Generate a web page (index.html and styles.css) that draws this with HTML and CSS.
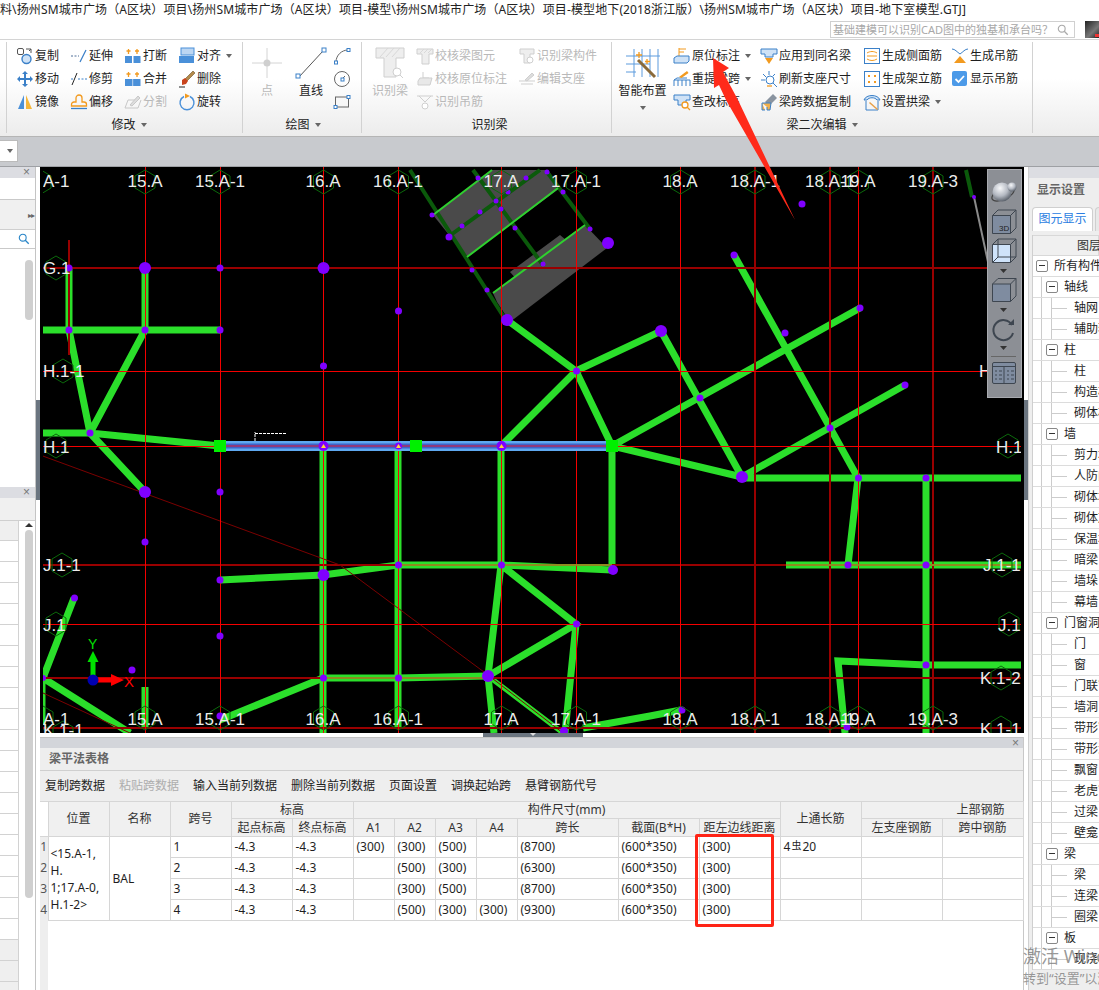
FILE: index.html
```html
<!DOCTYPE html>
<html lang="zh-CN">
<head>
<meta charset="utf-8">
<title>梁平法表格</title>
<link rel="stylesheet" href="styles.css">
</head>
<body>
<svg class="sprite" aria-hidden="true">
<defs>
<symbol id="i-copy" viewBox="0 0 18 18"><rect x="1.5" y="1.5" width="6" height="6" rx="1.5" fill="none" stroke="#555"/><path d="M10 2h5v4M15 2l-2 2" fill="none" stroke="#555"/><circle cx="10.5" cy="12" r="4.5" fill="#cfe2f6" stroke="#3b80c8" stroke-width="1.4"/></symbol>
<symbol id="i-move" viewBox="0 0 18 18"><path fill="#3b80c8" d="M9 1l3 3h-2v4h4V6l3 3-3 3v-2h-4v4h2l-3 3-3-3h2v-4H4v2L1 9l3-3v2h4V4H6z"/></symbol>
<symbol id="i-mirror" viewBox="0 0 18 18"><path fill="#4a90d9" d="M8 2v14H2z"/><path fill="#f5b63a" d="M10 2v14h6z"/></symbol>
<symbol id="i-extend" viewBox="0 0 18 18"><path d="M1 9h8" stroke="#4f6f98" stroke-dasharray="2 1.5" fill="none"/><path d="M10 15l6-12" stroke="#3b80c8" stroke-width="1.2" fill="none"/></symbol>
<symbol id="i-trim" viewBox="0 0 18 18"><path d="M2 15l5-12" stroke="#222" fill="none"/><path d="M1 9h3M8 9h9" stroke="#3b80c8" stroke-dasharray="2 1.5" fill="none"/></symbol>
<symbol id="i-offset" viewBox="0 0 18 18"><path d="M1.5 13v-1.5A2.5 2.5 0 0 1 4 9h2V5a3 3 0 0 1 3-3 3 3 0 0 1 3 3v4h2a2.5 2.5 0 0 1 2.5 2.5V13z" fill="none" stroke="#f29a1f" stroke-width="1.3"/><path d="M1 15.500h16" stroke="#3b80c8" stroke-width="1.3"/></symbol>
<symbol id="i-break" viewBox="0 0 18 18"><rect x="1" y="9" width="7" height="7" fill="#4a90d9"/><rect x="9.500" y="9" width="7" height="7" fill="#4a90d9"/><path d="M4.500 2v5M2.500 4h4M13 2v5M11 4h4" stroke="#f29a1f" stroke-width="1.300"/></symbol>
<symbol id="i-merge" viewBox="0 0 18 18"><rect x="1" y="9" width="15.500" height="7" fill="#4a90d9"/><path d="M8.700 9v7" stroke="#bcd6f2"/><path d="M4.500 2v5M2.500 4h4M13 2v5M11 4h4" stroke="#f29a1f" stroke-width="1.300"/></symbol>
<symbol id="i-split" viewBox="0 0 18 18"><path d="M1 15l3-8h8M1 15h13l3-8" fill="none" stroke="#c8c8c8"/><path d="M6 12l8-9 2 2-8 8z" fill="#ddd" stroke="#c8c8c8"/></symbol>
<symbol id="i-align" viewBox="0 0 18 18"><rect x="3" y="1" width="13" height="7" fill="#bcd6f2" stroke="#4a90d9"/><rect x="1" y="9" width="15" height="7" fill="#4a90d9"/></symbol>
<symbol id="i-del" viewBox="0 0 18 18"><path d="M7 9l8-8 2 2-8 8z" fill="#b48a4a" stroke="#6b5228" stroke-width=".6"/><path d="M4 10l3-2 3 3-2 3-4 1z" fill="#c9431c"/><path d="M1 17h6" stroke="#222"/></symbol>
<symbol id="i-rotate" viewBox="0 0 18 18"><path d="M6 3.500a7 7 0 1 0 6 0" fill="none" stroke="#4a90d9" stroke-width="1.400"/><path d="M7 .5l5 2.500-5 2.500z" fill="#f29a1f"/></symbol>
<symbol id="i-point" viewBox="0 0 36 36"><path d="M18 3v12M18 21v12M3 18h12M21 18h12" stroke="#d4d4d4"/><circle cx="18" cy="18" r="3.500" fill="#cfcfcf"/></symbol>
<symbol id="i-line" viewBox="0 0 36 36"><path d="M6 32L30 6" stroke="#555"/><rect x="3" y="29" width="4" height="4" fill="#fff" stroke="#3b80c8"/><rect x="29" y="3" width="4" height="4" fill="#fff" stroke="#3b80c8"/></symbol>
<symbol id="i-arc" viewBox="0 0 18 18"><path d="M3 15C3 8 9 3 15 3" fill="none" stroke="#666"/><rect x="1.500" y="14" width="3" height="3" fill="#fff" stroke="#3b80c8"/><rect x="14" y="1.500" width="3" height="3" fill="#fff" stroke="#3b80c8"/></symbol>
<symbol id="i-circle" viewBox="0 0 18 18"><circle cx="9" cy="9" r="7.500" fill="none" stroke="#666"/><path d="M9 9l3-3" stroke="#666"/><rect x="8" y="8" width="3" height="3" fill="#fff" stroke="#3b80c8"/></symbol>
<symbol id="i-rect" viewBox="0 0 18 18"><rect x="2.500" y="4" width="13" height="10" fill="none" stroke="#666"/><rect x="1" y="12.500" width="3" height="3" fill="#fff" stroke="#3b80c8"/><rect x="14" y="2.500" width="3" height="3" fill="#fff" stroke="#3b80c8"/></symbol>
<symbol id="i-idbeam" viewBox="0 0 36 36"><path d="M4 3h28v10H24v19H12V13H4z" fill="#eee" stroke="#cfcfcf"/><path d="M8 12l8-9M14 12l8-9M20 12l8-9" stroke="#d8d8d8"/><circle cx="25" cy="27" r="4" fill="#fff" stroke="#cfcfcf"/><path d="M28 30l3 3" stroke="#cfcfcf"/></symbol>
<symbol id="i-chk1" viewBox="0 0 18 18"><path d="M1 2h16v5h-4v10H6V7H1z" fill="#eee" stroke="#cfcfcf"/><path d="M4 6l4-4M8 6l4-4M12 6l4-4" stroke="#d8d8d8"/></symbol>
<symbol id="i-chk2" viewBox="0 0 18 18"><path d="M7 2v6h6" fill="none" stroke="#cfcfcf"/><path d="M2 11l2-3h12l-2 7H2z" fill="#e8e8e8" stroke="#cfcfcf"/></symbol>
<symbol id="i-idhang" viewBox="0 0 18 18"><path d="M1 3h16M3 3l6 6 6-6" fill="none" stroke="#cfcfcf"/><circle cx="9" cy="13" r="3" fill="#fff" stroke="#cfcfcf"/></symbol>
<symbol id="i-idcomp" viewBox="0 0 18 18"><path d="M2 2h14v5h-4v9H6V7H2z" fill="#eee" stroke="#cfcfcf"/><circle cx="12" cy="13" r="3" fill="#fff" stroke="#cfcfcf"/></symbol>
<symbol id="i-editsup" viewBox="0 0 18 18"><path d="M1 11h16M3 14h12" stroke="#cfcfcf"/><path d="M7 10l7-7 2 2-7 6z" fill="#ddd" stroke="#cfcfcf"/></symbol>
<symbol id="i-smart" viewBox="0 0 36 36"><path d="M9 4v28M17 4v28M25 4v28M33 4v28M1 11h34M1 19h24M1 27h10" stroke="#5c9bdd" fill="none"/><path d="M13 15l17 17" stroke="#8a6a3a" stroke-width="3"/><path d="M14 7v6M11 10h6M22 14v5M20 16.500h5" stroke="#f29a1f" stroke-width="1.300"/></symbol>
<symbol id="i-orig" viewBox="0 0 18 18"><path d="M6 1v8M6 2h7M6 5h5" stroke="#f29a1f" fill="none"/><path d="M1 11l3-2h12v5l-2 2H1z" fill="#cfe2f6" stroke="#3b80c8"/></symbol>
<symbol id="i-refetch" viewBox="0 0 18 18"><path d="M1 16V10h16v6M5 10v6M9 10v6M13 10v6M1 10l3-2h10" fill="none" stroke="#3b80c8"/><path d="M6 7l8-6 1.500 2-7 5z" fill="#f29a1f"/></symbol>
<symbol id="i-elev" viewBox="0 0 18 18"><path d="M1 2h16v5h-4v5H5V7H1z" fill="#cfe2f6" stroke="#3b80c8"/><circle cx="12" cy="12" r="3" fill="#fff" stroke="#f29a1f" stroke-width="1.300"/><path d="M14 14l3 3" stroke="#f29a1f" stroke-width="1.300"/></symbol>
<symbol id="i-apply" viewBox="0 0 18 18"><path d="M1 2h16v5h-4v3H5V7H1z" fill="#cfe2f6" stroke="#3b80c8"/><path d="M5 11h8l-4 6z" fill="#f29a1f"/></symbol>
<symbol id="i-refresh" viewBox="0 0 18 18"><circle cx="10" cy="10" r="4" fill="#fff" stroke="#3b80c8"/><path d="M9 1v4M3 4l3 3M1 10h4M15 4l-2 2M13 13l4 4" stroke="#3b80c8" fill="none"/><path d="M7 16h5" stroke="#f29a1f" stroke-width="1.300"/></symbol>
<symbol id="i-span" viewBox="0 0 18 18"><path d="M5 9l8-8 4 4-8 8z" fill="#8a94a0"/><path d="M2 10h9l-1 7H7v-3M2 10v7h3" fill="#f2b04a" stroke="#3b80c8"/></symbol>
<symbol id="i-side" viewBox="0 0 18 18"><rect x="1.500" y="1.500" width="15" height="15" fill="#fff" stroke="#3b80c8"/><path d="M4 6c3-2 7-2 10 0M4 12c3 2 7 2 10 0M4 9h10" fill="none" stroke="#f29a1f"/></symbol>
<symbol id="i-erect" viewBox="0 0 18 18"><rect x="1.500" y="1.500" width="15" height="15" fill="#fff" stroke="#3b80c8"/><path d="M5 5h2v2H5zM11 5h2v2h-2zM5 11h2v2H5zM11 11h2v2h-2z" fill="#f29a1f"/></symbol>
<symbol id="i-arch" viewBox="0 0 18 18"><path d="M1 7C3 1 15 1 17 7l-3 0C12 4 6 4 4 7z" fill="#cfe2f6" stroke="#3b80c8"/><path d="M3 8v9h12V8" fill="none" stroke="#3b80c8"/><path d="M7 9l8 7-1 1-8-7z" fill="#e8a048"/></symbol>
<symbol id="i-hang" viewBox="0 0 18 18"><path d="M1 2c3 0 5 3 8 5 3-2 5-5 8-5" fill="none" stroke="#3b80c8"/><path d="M9 9l6 7H3z" fill="#f29a1f"/></symbol>
<symbol id="i-check" viewBox="0 0 18 18"><rect x="1" y="1" width="15" height="15" rx="2" fill="#4c9ae8"/><path d="M4.500 9l3 3 5.500-6" fill="none" stroke="#fff" stroke-width="1.800"/></symbol>
<symbol id="i-search" viewBox="0 0 14 14"><circle cx="5.500" cy="5.500" r="4" fill="none" stroke="currentColor" stroke-width="1.300"/><path d="M8.500 8.500l4 4" stroke="currentColor" stroke-width="1.500"/></symbol>
<polygon id="hex" points="0,-12 10,-6 10,6 0,12 -10,6 -10,-6"/>
</defs>
</svg>

<header class="titlebar">
<div class="title">料\扬州SM城市广场（A区块）项目\扬州SM城市广场（A区块）项目-模型\扬州SM城市广场（A区块）项目-模型地下(2018浙江版）\扬州SM城市广场（A区块）项目-地下室模型.GTJ]</div>
<div class="title-tools">
<div class="searchbox"><span>基础建模可以识别CAD图中的独基和承台吗？</span><svg class="search-ico"><use href="#i-search"/></svg></div>
<div class="avatar"><span class="avatar-dot"></span></div>
</div>
</header>

<section class="ribbon">
<div class="rgroup g1">
<div class="rbody">
<div class="rcol w54">
<div class="ritem"><svg class="ico"><use href="#i-copy"/></svg>复制</div>
<div class="ritem"><svg class="ico"><use href="#i-move"/></svg>移动</div>
<div class="ritem"><svg class="ico"><use href="#i-mirror"/></svg>镜像</div>
</div>
<div class="rcol w54">
<div class="ritem"><svg class="ico"><use href="#i-extend"/></svg>延伸</div>
<div class="ritem"><svg class="ico"><use href="#i-trim"/></svg>修剪</div>
<div class="ritem"><svg class="ico"><use href="#i-offset"/></svg>偏移</div>
</div>
<div class="rcol w54">
<div class="ritem"><svg class="ico"><use href="#i-break"/></svg>打断</div>
<div class="ritem"><svg class="ico"><use href="#i-merge"/></svg>合并</div>
<div class="ritem off"><svg class="ico"><use href="#i-split"/></svg>分割</div>
</div>
<div class="rcol w54">
<div class="ritem"><svg class="ico"><use href="#i-align"/></svg>对齐<i class="caret"></i></div>
<div class="ritem"><svg class="ico"><use href="#i-del"/></svg>删除</div>
<div class="ritem"><svg class="ico"><use href="#i-rotate"/></svg>旋转</div>
</div>
</div>
<div class="rlabel">修改<i class="caret"></i></div>
</div>

<div class="rgroup g2">
<div class="rbody">
<div class="rbig off"><svg class="ico-big"><use href="#i-point"/></svg>点</div>
<div class="rbig"><svg class="ico-big"><use href="#i-line"/></svg>直线</div>
<div class="rcol w20">
<div class="ritem"><svg class="ico"><use href="#i-arc"/></svg></div>
<div class="ritem"><svg class="ico"><use href="#i-circle"/></svg></div>
<div class="ritem"><svg class="ico"><use href="#i-rect"/></svg></div>
</div>
</div>
<div class="rlabel">绘图<i class="caret"></i></div>
</div>

<div class="rgroup g3">
<div class="rbody">
<div class="rbig off"><svg class="ico-big"><use href="#i-idbeam"/></svg>识别梁</div>
<div class="rcol w102">
<div class="ritem off"><svg class="ico"><use href="#i-chk1"/></svg>校核梁图元</div>
<div class="ritem off"><svg class="ico"><use href="#i-chk2"/></svg>校核原位标注</div>
<div class="ritem off"><svg class="ico"><use href="#i-idhang"/></svg>识别吊筋</div>
</div>
<div class="rcol w90">
<div class="ritem off"><svg class="ico"><use href="#i-idcomp"/></svg>识别梁构件</div>
<div class="ritem off"><svg class="ico"><use href="#i-editsup"/></svg>编辑支座</div>
</div>
</div>
<div class="rlabel">识别梁</div>
</div>

<div class="rgroup g4">
<div class="rbody">
<div class="rbig wide"><svg class="ico-big"><use href="#i-smart"/></svg>智能布置<i class="caret"></i></div>
<div class="rcol w87">
<div class="ritem"><svg class="ico"><use href="#i-orig"/></svg>原位标注<i class="caret"></i></div>
<div class="ritem"><svg class="ico"><use href="#i-refetch"/></svg>重提梁跨<i class="caret"></i></div>
<div class="ritem"><svg class="ico"><use href="#i-elev"/></svg>查改标高</div>
</div>
<div class="rcol w103">
<div class="ritem"><svg class="ico"><use href="#i-apply"/></svg>应用到同名梁</div>
<div class="ritem"><svg class="ico"><use href="#i-refresh"/></svg>刷新支座尺寸</div>
<div class="ritem"><svg class="ico"><use href="#i-span"/></svg>梁跨数据复制</div>
</div>
<div class="rcol w88">
<div class="ritem"><svg class="ico"><use href="#i-side"/></svg>生成侧面筋</div>
<div class="ritem"><svg class="ico"><use href="#i-erect"/></svg>生成架立筋</div>
<div class="ritem"><svg class="ico"><use href="#i-arch"/></svg>设置拱梁<i class="caret"></i></div>
</div>
<div class="rcol w80">
<div class="ritem"><svg class="ico"><use href="#i-hang"/></svg>生成吊筋</div>
<div class="ritem"><svg class="ico"><use href="#i-check"/></svg>显示吊筋</div>
</div>
</div>
<div class="rlabel">梁二次编辑<i class="caret"></i></div>
</div>
</section>

<div class="subbar"><div class="combo"><i class="caret"></i></div></div>

<main class="workspace">
<aside class="leftpanel">
<div class="lp-top">
<div class="lp-title"><span class="close">×</span></div>
<div class="lp-blank"></div>
<div class="lp-tabs"><span class="more">▸▸</span></div>
<div class="lp-search"><svg class="lp-search-ico"><use href="#i-search"/></svg></div>
<div class="lp-list"><div class="thumb"></div></div>
</div>
<div class="lp-bottom">
<div class="lp-title"><span class="close">×</span></div>
<div class="lp-tabs short"></div>
<div class="lp-grid">
<div class="lp-rows">
<div class="lp-head"></div>
<div class="lp-row"></div><div class="lp-row"></div><div class="lp-row"></div><div class="lp-row"></div>
<div class="lp-row"></div><div class="lp-row"></div><div class="lp-row"></div><div class="lp-row"></div>
<div class="lp-row"></div><div class="lp-row"></div><div class="lp-row"></div><div class="lp-row"></div>
<div class="lp-row"></div><div class="lp-row"></div><div class="lp-row"></div><div class="lp-row"></div>
<div class="lp-row"></div><div class="lp-row"></div><div class="lp-row"></div>
<div class="lp-row gray"></div><div class="lp-row gray"></div><div class="lp-row gray"></div>
</div>
<div class="lp-scroll"><span class="arrow-up"></span><div class="thumb long"></div></div>
</div>
</div>
</aside>

<div class="gutter"><div class="grip"></div></div>

<div class="center">
<div class="canvas">
<svg class="cad" viewBox="40 167 984 566" width="984" height="566">
<defs><clipPath id="cadclip"><rect x="43" y="167" width="978" height="566"/></clipPath></defs>
<g clip-path="url(#cadclip)">
<g class="slab">
<polygon points="433,215 492,170 548,170 560,188 467,257"/>
<polygon points="510,272 560,235 590,260 535,300"/>
<polygon points="493,293 585,225 607,248 510,322 497,302"/>
</g>
<g class="wall">
<path d="M410 170L507 322M473 170L543 265M540 170L448 237M547 172L590 229M972 197L966 170"/>
</g>
<path class="thin-green" d="M433 215L492 170M467 257L558 188M493 293L585 225"/>
<path class="gray-line" d="M974 197L988 262"/>

<g class="beam">
<path d="M69 268V330M145 268V330M43 330H220M69 330L90 433M145 330L90 433M43 433H90L220 446M90 433L145 492"/>
<path d="M323 446V733M398 446V728M501 446V565M612 446V570"/>
<path d="M220 580L323 575L398 565H501L612 570"/>
<path d="M220 720L323 678H398L488 676"/>
<path d="M501 565L488 676L494 733M501 565L576 624L488 676M576 624L565 733"/>
<path d="M583 728L650 716L681 710"/>
<path d="M507 320L576 371L661 331L742 477M576 371L501 446M576 371L612 446L742 477M612 446L860 308M734 255L858 478M742 477L905 385M742 478H1022"/>
<path d="M858 478L848 565M786 565H1022M926 478V733M1022 665L926 665L838 661L845 733"/>
<path d="M74 598L43 678L130 733M145 687V728"/>
</g>
<path class="beam-thin" d="M488 676L563 733M43 680V725"/>

<g class="grid-dark">
<path d="M69 240V355M755 167V733M830 167V733M933 167V733M43 268H1021M43 565H1021M43 678H1021M43 728H1021"/>
</g>
<path class="grid-curve" d="M40 455L340 565L488 675L563 733M43 693L130 733"/>
<g class="grid-bright">
<path d="M145 167V733M220 167V733M323 167V733M398 167V733M501 167V733M576 167V733M680 167V733M858 167V733M43 371H1021M43 446H1021M43 624H1021"/>
</g>
<path class="core" d="M398 565H612M786 565H1022M323 678H488"/>

<path class="blue-outer" d="M220 446H612"/>
<path class="blue-inner" d="M220 446H612"/>
<path class="blue-core" d="M220 446H612"/>
<path class="note" d="M255 441V432M255 433.500H287"/>

<g class="column">
<rect x="214" y="440" width="12" height="12"/><rect x="410" y="440" width="12" height="12"/><rect x="606" y="440" width="12" height="12"/>
</g>

<g class="node">
<circle cx="145" cy="268" r="6"/><circle cx="323.500" cy="268" r="6"/><circle cx="145" cy="492" r="6"/><circle cx="323.500" cy="575" r="6"/><circle cx="488" cy="676" r="6"/><circle cx="661" cy="331" r="6"/><circle cx="742" cy="477" r="6"/><circle cx="507" cy="320" r="6"/><circle cx="608" cy="243" r="6"/><circle cx="613" cy="570" r="5"/>
<circle cx="323.500" cy="446" r="5"/><circle cx="501.500" cy="446" r="5"/><circle cx="398.500" cy="446" r="3.500"/>
<circle cx="69" cy="268" r="3.500"/><circle cx="220" cy="268" r="3.500"/><circle cx="398.500" cy="311" r="3.500"/><circle cx="323.500" cy="366" r="3.500"/><circle cx="69" cy="330" r="3.500"/><circle cx="145" cy="330" r="3.500"/><circle cx="220" cy="330" r="3.500"/><circle cx="90" cy="433" r="3.500"/><circle cx="220" cy="492" r="3.500"/><circle cx="145" cy="542" r="3.500"/><circle cx="220" cy="580" r="3.500"/><circle cx="74.500" cy="598" r="3.500"/><circle cx="220" cy="636" r="3.500"/><circle cx="132" cy="670" r="3.500"/><circle cx="220" cy="716" r="3.500"/><circle cx="323.500" cy="678" r="3.500"/><circle cx="398.500" cy="565" r="3.500"/><circle cx="398.500" cy="678" r="3.500"/><circle cx="501.500" cy="565" r="3.500"/><circle cx="576.500" cy="624" r="3.500"/><circle cx="576.500" cy="371" r="3.500"/><circle cx="700" cy="398" r="3.500"/><circle cx="802" cy="204" r="3.500"/><circle cx="734" cy="255" r="3.500"/><circle cx="785" cy="333" r="3.500"/><circle cx="860" cy="308" r="3.500"/><circle cx="830" cy="428" r="3.500"/><circle cx="905" cy="385" r="3.500"/><circle cx="858.500" cy="478" r="3.500"/><circle cx="926" cy="478" r="3.500"/><circle cx="848" cy="565" r="3.500"/><circle cx="926" cy="565" r="3.500"/><circle cx="926" cy="665" r="3.500"/><circle cx="682" cy="710" r="3.500"/><circle cx="847" cy="727" r="3.500"/><circle cx="564" cy="731" r="4"/><circle cx="43" cy="678" r="3"/>
<circle cx="432" cy="215" r="2.500"/><circle cx="449" cy="237" r="3.500"/><circle cx="462" cy="226" r="2.500"/><circle cx="480" cy="212" r="2.500"/><circle cx="478" cy="178" r="2.500"/><circle cx="526" cy="178" r="2.500"/><circle cx="547" cy="172" r="2.500"/><circle cx="496" cy="201" r="2.500"/><circle cx="501" cy="209" r="2.500"/><circle cx="508" cy="192" r="2.500"/><circle cx="515" cy="228" r="2.500"/><circle cx="563" cy="192" r="2.500"/><circle cx="590" cy="229" r="2.500"/><circle cx="543" cy="264" r="2.500"/><circle cx="472" cy="270" r="2.500"/><circle cx="487" cy="290" r="2.500"/><circle cx="974" cy="197" r="2"/>
</g>
<path class="tri" d="M323.500 444l2.500 4h-5zM398.500 444l2.500 4h-5zM501.500 444l2.500 4h-5z"/>

<g class="hexes">
<use href="#hex" x="41" y="182"/><use href="#hex" x="145" y="182"/><use href="#hex" x="220" y="182"/><use href="#hex" x="323.500" y="182"/><use href="#hex" x="398.500" y="182"/><use href="#hex" x="501.500" y="182"/><use href="#hex" x="576.500" y="182"/><use href="#hex" x="680.500" y="182"/><use href="#hex" x="755" y="182"/><use href="#hex" x="830" y="182"/><use href="#hex" x="858.500" y="182"/><use href="#hex" x="933" y="182"/>
<use href="#hex" x="145" y="718"/><use href="#hex" x="220" y="718"/><use href="#hex" x="323.500" y="718"/><use href="#hex" x="398.500" y="718"/><use href="#hex" x="501.500" y="718"/><use href="#hex" x="576.500" y="718"/><use href="#hex" x="680.500" y="718"/><use href="#hex" x="755" y="718"/><use href="#hex" x="830" y="718"/><use href="#hex" x="858.500" y="718"/><use href="#hex" x="933" y="718"/>
<use href="#hex" x="56" y="268"/><use href="#hex" x="63" y="371"/><use href="#hex" x="56" y="446"/><use href="#hex" x="62" y="565"/><use href="#hex" x="56" y="624"/><use href="#hex" x="43" y="718"/><use href="#hex" x="63" y="733"/>
<use href="#hex" x="1008" y="446"/><use href="#hex" x="1002" y="565"/><use href="#hex" x="1009" y="624"/><use href="#hex" x="1001" y="678"/><use href="#hex" x="1001" y="728"/>
</g>
<g class="axis">
<text x="43" y="187" class="start">A-1</text>
<text x="145" y="187">15.A</text><text x="220" y="187">15.A-1</text><text x="323" y="187">16.A</text><text x="398" y="187">16.A-1</text><text x="501" y="187">17.A</text><text x="576" y="187">17.A-1</text><text x="680" y="187">18.A</text><text x="755" y="187">18.A-1</text><text x="830" y="187">18.A-1</text><text x="858" y="187">19.A</text><text x="933" y="187">19.A-3</text>
<text x="43" y="725" class="start">A-1</text>
<text x="145" y="725">15.A</text><text x="220" y="725">15.A-1</text><text x="323" y="725">16.A</text><text x="398" y="725">16.A-1</text><text x="501" y="725">17.A</text><text x="576" y="725">17.A-1</text><text x="680" y="725">18.A</text><text x="755" y="725">18.A-1</text><text x="830" y="725">18.A-1</text><text x="858" y="725">19.A</text><text x="933" y="725">19.A-3</text>
<text x="43" y="274" class="start">G.1</text><text x="43" y="377" class="start">H.1-1</text><text x="43" y="453" class="start">H.1</text><text x="43" y="571" class="start">J.1-1</text><text x="43" y="631" class="start">J.1</text><text x="43" y="736" class="start">K.1-1</text>
<text x="979" y="377" class="start">H.1-1</text><text x="996" y="453" class="start">H.1</text><text x="983" y="571" class="start">J.1-1</text><text x="998" y="631" class="start">J.1</text><text x="980" y="684" class="start">K.1-2</text><text x="980" y="735" class="start">K.1-1</text>
</g>
</g>
<g class="ucs">
<path class="ucs-x" d="M93 680H113"/><path class="ucs-xh" d="M111 674V686L124 680Z"/>
<path class="ucs-y" d="M93 680V660"/><path class="ucs-yh" d="M87.500 662H98.500L93 651Z"/>
<circle class="ucs-o" cx="93" cy="680" r="5.500"/>
<text class="ucs-xt" x="124" y="687">X</text><text class="ucs-yt" x="88" y="649">Y</text>
</g>
</svg>
<div class="viewbar">
<svg viewBox="988 170 33 227" width="33" height="227">
<defs><radialGradient id="orb" cx=".4" cy=".3" r=".75"><stop offset="0" stop-color="#f7f8fa"/><stop offset=".55" stop-color="#b4b9c2"/><stop offset="1" stop-color="#4f5660"/></radialGradient></defs>
<ellipse cx="1003" cy="194" rx="12" ry="5.500" transform="rotate(-25 1003 194)" fill="none" stroke="#444" stroke-width="1.200"/>
<circle cx="1002" cy="192" r="9.500" fill="url(#orb)"/><circle cx="1012" cy="187" r="4.500" fill="url(#orb)"/>
<g class="vb-cube"><path d="M992.500 215.500H1010.500V233.500H992.500Z"/><path d="M992.500 215.500L998 210H1016V228L1010.500 233.500M1010.500 215.500L1016 210"/></g>
<text class="vb-3d" x="999" y="231">3D</text>
<g class="vb-cube light"><path d="M992.500 244.500H1010.500V262.500H992.500Z"/><path d="M992.500 244.500L998 239H1016V257L1010.500 262.500M1010.500 244.500L1016 239M998 239V257H1016M998 257L992.500 262.500"/></g>
<path class="vb-tri" d="M1000 269h7l-3.500 4z"/>
<g class="vb-cube"><path d="M992.500 284H1010.500V301.500H992.500Z"/><path d="M992.500 284L998 278.500H1016V296L1010.500 301.500M1010.500 284L1016 278.500"/></g>
<path class="vb-tri" d="M1000 308h7l-3.500 4z"/>
<path class="vb-rot" d="M1012 325A10 10 0 1 0 1013 333"/><path class="vb-rotd" d="M1008 325h6v-6z"/>
<path class="vb-tri" d="M1000 346h7l-3.500 4z"/>
<path class="vb-sep" d="M991 356.500h25"/>
<g class="vb-cube"><rect x="992.500" y="362.500" width="23" height="21" rx="1.500"/><path d="M992.500 366.500h23M1004 366.500v17M995 371h2M995 375h2M995 379h2M999 371h3M999 375h3M999 379h3M1007 371h2M1007 375h2M1007 379h2M1011 371h3M1011 375h3M1011 379h3"/></g>
</svg>
</div>
</div>
<div class="splitter"><div class="split-grip"><span class="split-tri"></span></div></div>
<section class="tablepanel">
<div class="tp-strip"><span class="close">×</span></div>
<div class="tp-title">梁平法表格</div>
<div class="tp-tools">
<span>复制跨数据</span><span class="dim">粘贴跨数据</span><span>输入当前列数据</span><span>删除当前列数据</span><span>页面设置</span><span>调换起始跨</span><span>悬臂钢筋代号</span>
</div>
<div class="table-wrap">
<table class="beam-table">
<colgroup>
<col class="c8"><col class="c61"><col class="c61"><col class="c61"><col class="c61"><col class="c61">
<col class="c41"><col class="c41"><col class="c41"><col class="c41"><col class="c101">
<col class="c81"><col class="c81"><col class="c81"><col class="c81"><col class="c81">
</colgroup>
<thead>
<tr class="h1">
<th rowspan="2" class="corner"></th><th rowspan="2">位置</th><th rowspan="2">名称</th><th rowspan="2">跨号</th>
<th colspan="2">标高</th><th colspan="7">构件尺寸(mm)</th><th rowspan="2">上通长筋</th><th colspan="2" class="top-steel">上部钢筋</th>
</tr>
<tr class="h2">
<th>起点标高</th><th>终点标高</th><th>A1</th><th>A2</th><th>A3</th><th>A4</th><th>跨长</th><th>截面(B*H)</th><th>距左边线距离</th><th>左支座钢筋</th><th>跨中钢筋</th>
</tr>
</thead>
<tbody>
<tr><td class="rn">1</td><td rowspan="4" class="pos">&lt;15.A-1,<br>H.<br>1;17.A-0,<br>H.1-2&gt;</td><td rowspan="4">BAL</td><td>1</td><td>-4.3</td><td>-4.3</td><td>(300)</td><td>(300)</td><td>(500)</td><td></td><td>(8700)</td><td>(600*350)</td><td>(300)</td><td>4<span class="rebar">虫</span>20</td><td></td><td></td></tr>
<tr><td class="rn">2</td><td>2</td><td>-4.3</td><td>-4.3</td><td></td><td>(500)</td><td>(300)</td><td></td><td>(6300)</td><td>(600*350)</td><td>(300)</td><td></td><td></td><td></td></tr>
<tr><td class="rn">3</td><td>3</td><td>-4.3</td><td>-4.3</td><td></td><td>(300)</td><td>(500)</td><td></td><td>(8700)</td><td>(600*350)</td><td>(300)</td><td></td><td></td><td></td></tr>
<tr><td class="rn">4</td><td>4</td><td>-4.3</td><td>-4.3</td><td></td><td>(500)</td><td>(300)</td><td>(300)</td><td>(9300)</td><td>(600*350)</td><td>(300)</td><td></td><td></td><td></td></tr>
</tbody>
</table>
<div class="redbox"></div>
</div>
</section>
</div>

<div class="gutter right"><div class="grip"></div></div>

<aside class="rightpanel">
<div class="rp-strip"></div>
<div class="rp-title">显示设置</div>
<div class="rp-tabs"><div class="rp-tab">图元显示</div><div class="rp-tab ghost"></div></div>
<div class="tree">
<div class="tree-head">图层</div>
<div class="tn l0"><b class="box"></b>所有构件</div>
<div class="tn l1"><b class="box"></b>轴线</div>
<div class="tn l2">轴网</div>
<div class="tn l2">辅助轴线</div>
<div class="tn l1"><b class="box"></b>柱</div>
<div class="tn l2">柱</div>
<div class="tn l2">构造柱</div>
<div class="tn l2">砌体柱</div>
<div class="tn l1"><b class="box"></b>墙</div>
<div class="tn l2">剪力墙</div>
<div class="tn l2">人防门框墙</div>
<div class="tn l2">砌体墙</div>
<div class="tn l2">砌体加筋</div>
<div class="tn l2">保温墙</div>
<div class="tn l2">暗梁</div>
<div class="tn l2">墙垛</div>
<div class="tn l2">幕墙</div>
<div class="tn l1"><b class="box"></b>门窗洞</div>
<div class="tn l2">门</div>
<div class="tn l2">窗</div>
<div class="tn l2">门联窗</div>
<div class="tn l2">墙洞</div>
<div class="tn l2">带形窗</div>
<div class="tn l2">带形洞</div>
<div class="tn l2">飘窗</div>
<div class="tn l2">老虎窗</div>
<div class="tn l2">过梁</div>
<div class="tn l2">壁龛</div>
<div class="tn l1"><b class="box"></b>梁</div>
<div class="tn l2">梁</div>
<div class="tn l2">连梁</div>
<div class="tn l2">圈梁</div>
<div class="tn l1"><b class="box"></b>板</div>
<div class="tn l2">现浇板</div>
</div>
</aside>
</main>

<svg class="annot-arrow" viewBox="0 0 1099 990" width="1099" height="990" aria-hidden="true"><polygon points="713,58 729,68 723,72 738,100 795,220 726,100 719,85 714,88"/></svg>
<div class="watermark"><div class="wm-1">激活 Windows</div><div class="wm-2">转到“设置”以激活 Windows</div></div>
</body>
</html>
```

FILE: styles.css
```css
* { box-sizing: border-box; }
html, body { margin: 0; padding: 0; }
body {
  position: relative;
  width: 1099px;
  height: 990px;
  overflow: hidden;
  background: #fff;
  color: #1e1e1e;
  font: 12px/16px "Noto Sans", "Noto Sans CJK SC", sans-serif;
}
.sprite { position: absolute; width: 0; height: 0; }

/* title bar */
.titlebar { height: 40px; background: #fff; border-bottom: 1px solid #d4d4d4; }
.title { height: 19px; line-height: 19px; white-space: nowrap; overflow: hidden; color: #222; letter-spacing: .12px; }
.title-tools { display: flex; align-items: flex-start; justify-content: flex-end; padding-top: 2px; }
.searchbox {
  display: flex; align-items: center; justify-content: space-between;
  width: 245px; height: 17px; padding: 0 5px 0 2px;
  border: 1px solid #d0d0d0; color: #a8a8a8; font-size: 11px; line-height: 15px;
}
.search-ico { width: 12px; height: 12px; color: #aaa; }
.avatar { position: relative; width: 14px; height: 17px; margin-left: 10px; background: linear-gradient(135deg, #222, #777 60%, #222); }
.avatar-dot { position: absolute; right: 0; bottom: 1px; width: 4px; height: 3px; background: #e33; }

/* ribbon */
.ribbon {
  display: flex; height: 97px; padding: 2px 0 3px 6px;
  background: linear-gradient(#fff 40%, #ececec);
  border-bottom: 1px solid #b5b5b5;
}
.rgroup { display: flex; flex-direction: column; border-right: 1px solid #d2d2d2; }
.g1 { width: 237px; border-left: 1px solid #d2d2d2; padding-left: 9px; }
.g2 { width: 119px; padding-left: 2px; }
.g3 { width: 250px; padding-left: 6px; }
.g4 { width: 421px; }
.rbody { display: flex; padding-top: 2px; }
.rcol { display: flex; flex-direction: column; }
.w54 { width: 54px; } .w20 { width: 20px; } .w102 { width: 102px; } .w90 { width: 90px; }
.w87 { width: 87px; } .w103 { width: 103px; } .w88 { width: 88px; } .w80 { width: 80px; }
.g3 .rbig + .rcol { margin-left: 4px; }
.ritem { display: flex; align-items: center; height: 23px; white-space: nowrap; }
.ico { flex: none; width: 18px; height: 18px; margin-right: 1px; }
.rbig { display: flex; flex-direction: column; align-items: center; width: 44px; white-space: nowrap; }
.rbig.wide { width: 61px; }
.ico-big { width: 36px; height: 36px; margin: 1px 0 2px; }
.off { color: #b9b9b9; }
.rbig .caret { margin: 7px 0 0; }
.rlabel { flex: 1; display: flex; align-items: center; justify-content: center; padding-top: 4px; color: #222; }
.caret {
  display: inline-block; width: 0; height: 0; margin-left: 5px;
  border: 3px solid transparent; border-top: 4px solid #666; border-bottom: 0;
}

.subbar { height: 30px; padding-top: 3px; background: #c8cace; border-bottom: 1px solid #9ea0a4; }
.combo { display: flex; align-items: center; justify-content: flex-end; width: 18px; height: 22px; padding-right: 4px; background: #fff; border: 1px solid #bbb; border-left: 0; }

/* main area */
.workspace { display: grid; grid-template-columns: 36px 4px 984px 4px 71px; height: 823px; }
.gutter { padding-top: 233px; background: #fff; }
.grip { height: 100px; background: #6b7580; }

/* left panel */
.leftpanel { display: flex; flex-direction: column; border-right: 1px solid #c4c4c4; }
.lp-top { display: flex; flex-direction: column; height: 320px; }
.lp-title { display: flex; align-items: center; justify-content: flex-end; height: 11px; padding-right: 5px; background: #dcdde2; }
.close { color: #777; font: 12px/11px "Liberation Sans", sans-serif; }
.lp-blank { height: 22px; border-bottom: 1px solid #c9c9c9; }
.lp-tabs { display: flex; align-items: center; justify-content: flex-end; height: 30px; padding-right: 1px; background: #f0f0f0; border-bottom: 1px solid #cfcfcf; }
.lp-tabs.short { height: 23px; }
.more { color: #666; font-size: 8px; letter-spacing: -1px; }
.lp-search { display: flex; align-items: center; justify-content: flex-end; height: 19px; padding-right: 5px; border-bottom: 1px solid #c9c9c9; }
.lp-search-ico { width: 12px; height: 12px; color: #2a86c8; }
.lp-list { flex: 1; display: flex; justify-content: flex-end; padding: 11px 2px 0 0; }
.thumb { width: 8px; height: 60px; border-radius: 4px; background: #cfcfcf; }
.lp-bottom { flex: 1; display: flex; flex-direction: column; min-height: 0; }
.lp-grid { flex: 1; display: flex; min-height: 0; }
.lp-rows { width: 19px; border-right: 1px solid #d2d2d2; overflow: hidden; }
.lp-head { height: 20px; background: #efefef; border-bottom: 1px solid #d2d2d2; }
.lp-row { height: 21px; border-bottom: 1px solid #d2d2d2; }
.lp-row.gray { background: #efefef; }
.lp-scroll { flex: 1; display: flex; flex-direction: column; align-items: flex-end; padding: 2px 2px 0 0; }
.arrow-up { width: 0; height: 0; margin: 0 0 3px; border: 4px solid transparent; border-top: 0; border-bottom: 4px solid #333; }
.thumb.long { height: 368px; }

/* canvas */
.center { display: flex; flex-direction: column; min-width: 0; }
.canvas { position: relative; height: 566px; background: #000; }
.cad { display: block; }
.slab polygon { fill: #4a4a4a; }
.wall { fill: none; stroke: #0b5a0b; stroke-width: 4; }
.thin-green { fill: none; stroke: #2fd02f; stroke-width: 2; }
.gray-line { fill: none; stroke: #8a8a8a; stroke-width: 2; }
.beam { fill: none; stroke: #2bdf2b; stroke-width: 7; stroke-linejoin: miter; }
.beam-thin { fill: none; stroke: #2bdf2b; stroke-width: 5; }
.grid-dark { fill: none; stroke: #990000; stroke-width: 2; shape-rendering: crispEdges; }
.grid-curve { fill: none; stroke: #7a0000; stroke-width: 1; }
.grid-bright { fill: none; stroke: #f40000; stroke-width: 1; shape-rendering: crispEdges; }
.core { fill: none; stroke: #8f8a20; stroke-width: 2; shape-rendering: crispEdges; }
.blue-outer { stroke: #5ea8f0; stroke-width: 10; }
.blue-inner { stroke: #3f63c8; stroke-width: 5; }
.blue-core { stroke: #e01030; stroke-width: 1; }
.note { fill: none; stroke: #fff; stroke-width: 1; stroke-dasharray: 3 1; }
.column rect { fill: #00f000; }
.node circle { fill: #8000ff; }
.tri { fill: #ffd83a; }
.hexes { fill: none; stroke: #0b6a0b; stroke-width: 1; }
.axis text { fill: #ececec; font: 17px "Liberation Sans", sans-serif; text-anchor: middle; }
.axis text.start { text-anchor: start; }
.ucs-x { stroke: #f00; stroke-width: 5; }
.ucs-xh { fill: #f00; }
.ucs-y { stroke: #00e000; stroke-width: 5; }
.ucs-yh { fill: #00e000; }
.ucs-o { fill: #0000b0; }
.ucs-xt { fill: #f00; font: 15px "Liberation Sans", sans-serif; }
.ucs-yt { fill: #00e000; font: 14px "Liberation Sans", sans-serif; }

.viewbar { position: absolute; left: 948px; top: 3px; width: 33px; height: 227px; background: #8c8f95; outline: 1px solid #a9abb0; }
.viewbar svg { display: block; }
.vb-cube { fill: none; stroke: #3e4650; stroke-width: 1; }
.vb-cube path:first-child, .vb-cube rect { fill: #7f8ca0; }
.vb-cube.light path:first-child { fill: #cfe3fa; }
.vb-3d { fill: #222; font: 8px "Liberation Sans", sans-serif; }
.vb-tri { fill: #333; }
.vb-rot { fill: none; stroke: #3e4650; stroke-width: 2; }
.vb-rotd { fill: #3e4650; }
.vb-sep { stroke: #666; }

.splitter { display: flex; justify-content: center; height: 4px; background: #fff; padding-left: 2px; }
.split-grip { display: flex; justify-content: center; width: 100px; height: 4px; background: #6b7580; }
.split-tri { width: 0; height: 0; border: 3px solid transparent; border-top: 3px solid #ddd; border-bottom: 0; }

/* table panel */
.tablepanel { flex: 1; display: flex; flex-direction: column; min-height: 0; border-right: 1px solid #c8c8c8; }
.tp-strip { display: flex; align-items: center; justify-content: flex-end; height: 11px; padding-right: 4px; background: #d3d5da; border-top: 1px solid #c2c2c2; }
.tp-title { height: 23px; padding-left: 9px; line-height: 22px; color: #666; font-weight: 700; background: #eee; border-bottom: 1px solid #cfcfcf; }
.tp-tools { display: flex; gap: 14px; align-items: center; height: 30px; padding-left: 5px; background: #eee; }
.tp-tools .dim { color: #adadad; }
.table-wrap { position: relative; flex: 1; background: linear-gradient(#eee, #eee) 0 0 / 8px 100% no-repeat; }
.beam-table { table-layout: fixed; width: 983px; border-collapse: collapse; }
.c8 { width: 8px; } .c61 { width: 61px; } .c41 { width: 41px; } .c101 { width: 101px; } .c81 { width: 81px; }
.beam-table th, .beam-table td { padding: 0 0 0 3px; border: 1px solid #d6d6d6; font-weight: 400; white-space: nowrap; overflow: hidden; }
.beam-table th { padding: 0; text-align: center; background: #f0f0f0; color: #333; }
.h1 { height: 17px; } .h2 { height: 18px; }
.beam-table tbody tr { height: 21px; }
.beam-table .corner { background: #fff; border-left: 0; }
.beam-table .rn { padding: 0; text-align: center; background: #eee; border: 0; color: #555; }
.beam-table .pos { padding-left: 2px; line-height: 17px; }
.beam-table .top-steel { padding-left: 95px; text-align: left; }
.rebar { margin: 0 1px; font-size: 10px; position: relative; top: -2px; }
.redbox { position: absolute; left: 655px; top: 33px; width: 79px; height: 93px; border: 3px solid #ff2416; border-radius: 2px; }

/* right panel */
.rightpanel { display: flex; flex-direction: column; background: #eee; border-left: 1px solid #d0d0d0; overflow: hidden; }
.rp-strip { height: 11px; background: #dcdde2; }
.rp-title { flex: none; height: 29px; padding-left: 8px; line-height: 23px; color: #666; font-weight: 700; white-space: nowrap; }
.rp-tabs { display: flex; flex: none; gap: 2px; height: 24px; padding-left: 3px; }
.rp-tab { flex: none; width: 61px; height: 24px; line-height: 22px; text-align: center; white-space: nowrap; color: #2a7de1; background: #fff; border: 1px solid #cfcfcf; border-bottom: 0; border-radius: 4px 4px 0 0; }
.rp-tab.ghost { background: #e8e8e8; }
.tree { flex: none; margin: 4px 0 0 3px; background: #fff; border-left: 1px solid #cfcfcf; }
.tree-head { height: 21px; padding-left: 44px; line-height: 20px; background: #f0f0f0; border: 1px solid #d8d8d8; border-left: 0; color: #333; white-space: nowrap; }
.tn { display: flex; align-items: center; height: 21px; white-space: nowrap; border-bottom: 1px solid #dcdcdc; background: linear-gradient(#ccc, #ccc) 8px 0 / 1px 100% no-repeat; }
.tn.l0 { padding-left: 3px; background: none; }
.tn.l1 { padding-left: 13px; }
.tn.l2 { padding-left: 18px; }
.box { position: relative; flex: none; width: 12px; height: 12px; margin-right: 6px; background: #fff; border: 1px solid #888; border-radius: 2px; }
.box::after { content: ""; position: absolute; left: 2px; top: 4px; width: 6px; height: 1px; background: #333; }
.tn.l2::before {
  content: ""; align-self: stretch; flex: none; width: 16px; margin-right: 7px;
  background: linear-gradient(#ccc, #ccc) 0 0 / 1px 100% no-repeat, linear-gradient(#ccc, #ccc) 0 50% / 100% 1px no-repeat;
}

/* overlays */
.annot-arrow { position: absolute; left: 0; top: 0; pointer-events: none; }
.annot-arrow polygon { fill: #ff2a1a; }
.watermark { position: absolute; left: 1023px; top: 944px; color: rgba(120, 120, 120, .75); white-space: nowrap; pointer-events: none; }
.wm-1 { font-size: 18px; line-height: 24px; }
.wm-2 { font-size: 13px; line-height: 20px; }
```
